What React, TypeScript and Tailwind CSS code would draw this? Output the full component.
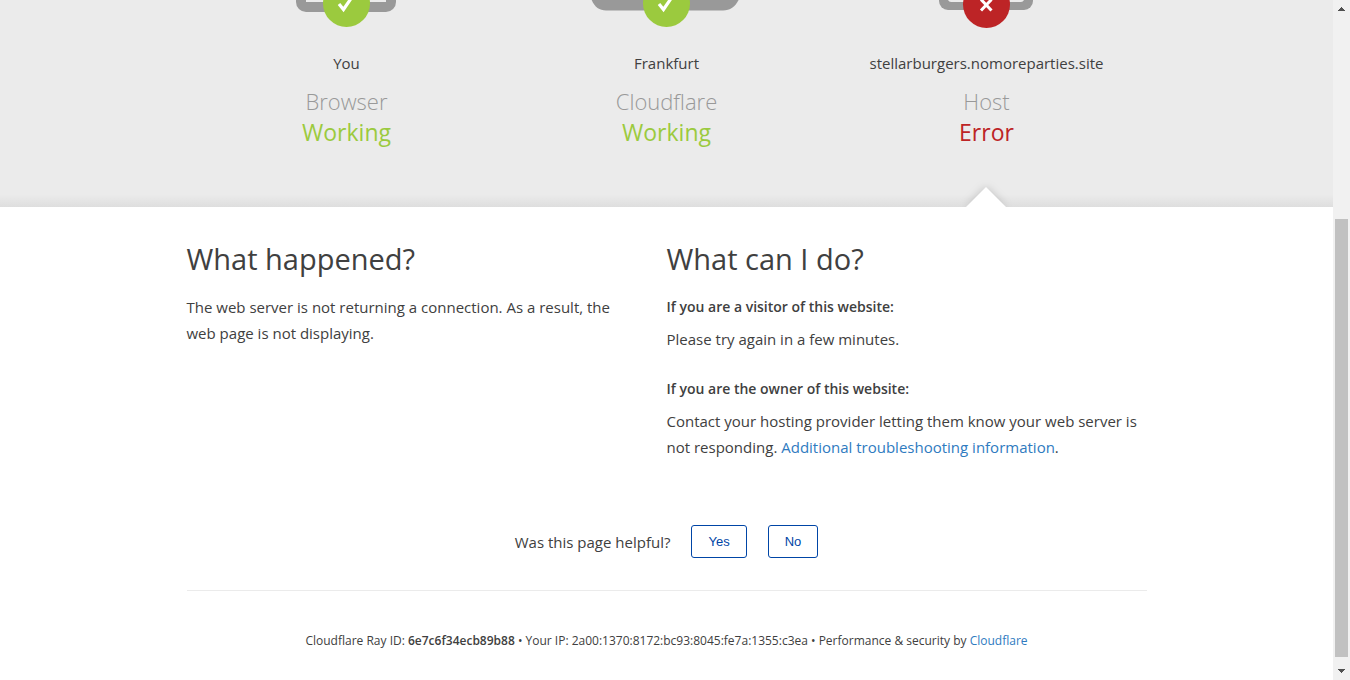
import type { ReactNode } from "react";

function BrowserIcon() {
  return (
    <svg width="151" height="28" viewBox="0 0 151 28" aria-hidden="true">
      <path d="M25 0H125V2A10 10 0 0 1 115 12H35A10 10 0 0 1 25 2Z" fill="#999" />
      <path d="M35 0H115V2H35Z" fill="#ebebeb" />
      <circle cx="75.5" cy="3.5" r="23.5" fill="#9bca3e" />
      <path d="M68 4L72.5 9.5L80 -1.5" fill="none" stroke="#fff" strokeWidth="3.2" />
    </svg>
  );
}

function CloudIcon() {
  return (
    <svg width="151" height="28" viewBox="0 0 151 28" aria-hidden="true">
      <path d="M-1 -6H150C147 4 141 10.5 132 10.5H15C7 10.5 1 5 -1 -6Z" fill="#999" />
      <circle cx="75.5" cy="3.5" r="23.5" fill="#9bca3e" />
      <path d="M68 4L72.5 9.5L80 -1.5" fill="none" stroke="#fff" strokeWidth="3.2" />
    </svg>
  );
}

function HostIcon() {
  return (
    <svg width="151" height="28" viewBox="0 0 151 28" aria-hidden="true">
      <path d="M28 0H122V1A9 9 0 0 1 113 10H37A9 9 0 0 1 28 1Z" fill="#999" />
      <path d="M37 0H113Q112 2 110 2H40Q38 2 37 0Z" fill="#ebebeb" />
      <circle cx="75.5" cy="4.5" r="23.5" fill="#bd2426" />
      <path d="M70 -0.5L80.5 10.5M80.5 -0.5L70 10.5" stroke="#fff" strokeWidth="3" />
    </svg>
  );
}

type StatusProps = {
  icon: ReactNode;
  place: string;
  name: string;
  status: string;
  failed?: boolean;
};

function Status({ icon, place, name, status, failed }: StatusProps) {
  return (
    <div className="relative flex flex-1 flex-col items-center pb-[59px] text-center">
      {icon}
      <span className="mt-[23px] text-[15px] leading-6">{place}</span>
      <h3 className="mt-[11px] text-[22px] leading-[30px] font-light text-[#999]">{name}</h3>
      <span className={failed ? "text-[23px] leading-8 text-[#bd2426]" : "text-[23px] leading-8 text-[#9bca3e]"}>
        {status}
      </span>
      {failed && (
        <svg className="absolute bottom-0" width="61" height="30" viewBox="0 0 61 30" aria-hidden="true">
          <path d="M10 30L30 10L50 30Z" fill="#fff" className="drop-shadow-[0_0_4px_rgba(0,0,0,0.18)]" />
        </svg>
      )}
    </div>
  );
}

function ScrollBar() {
  return (
    <div className="flex w-[17px] shrink-0 flex-col items-center bg-[#f1f1f1]" aria-hidden="true">
      <svg width="17" height="17" viewBox="0 0 17 17" shapeRendering="crispEdges">
        <path d="M8 7h1v1h1v1h1v1h1v1H5v-1h1v-1h1v-1h1Z" fill="#505050" />
      </svg>
      <div className="grow-202 basis-0" />
      <div className="w-[13px] grow-438 basis-0 bg-[#c1c1c1]" />
      <div className="grow-6 basis-0" />
      <svg width="17" height="17" viewBox="0 0 17 17" shapeRendering="crispEdges">
        <path d="M5 6h7v1h-1v1h-1v1H9v1H8V9H7V8H6V7H5Z" fill="#505050" />
      </svg>
    </div>
  );
}

const button =
  "rounded-[3px] border border-[#0045a6] px-4 py-1.5 font-['Liberation_Sans',sans-serif] text-[13px] leading-[19px] text-[#0045a6]";

export default function App() {
  return (
    <div className="flex min-h-screen bg-white font-['Open_Sans','Noto_Sans',sans-serif] text-[#404040]">
      <main className="min-w-0 flex-1">
        <section className="bg-[linear-gradient(to_top,#dedede,#ebebeb_6%)]">
          <div className="mx-auto flex max-w-[960px]">
            <Status icon={<BrowserIcon />} place="You" name="Browser" status="Working" />
            <Status icon={<CloudIcon />} place="Frankfurt" name="Cloudflare" status="Working" />
            <Status icon={<HostIcon />} place="stellarburgers.nomoreparties.site" name="Host" status="Error" failed />
          </div>
        </section>

        <div className="mx-auto max-w-[960px]">
          <section className="grid grid-cols-2 pt-8 text-[15px] leading-[26px]">
            <div className="pr-12">
              <h2 className="mb-[15px] text-[29px] leading-10">What happened?</h2>
              <p>The web server is not returning a connection. As a result, the web page is not displaying.</p>
            </div>
            <div>
              <h2 className="mb-4 text-[29px] leading-10">What can I do?</h2>
              <h3 className="mb-[7px] text-[14px] leading-6 font-semibold">If you are a visitor of this website:</h3>
              <p>Please try again in a few minutes.</p>
              <h3 className="mt-[25px] mb-[7px] text-[14px] leading-6 font-semibold">If you are the owner of this website:</h3>
              <p>
                Contact your hosting provider letting them know your web server is not responding.{" "}
                <a href="#troubleshooting" className="text-[#2f7bbf]">Additional troubleshooting information</a>.
              </p>
            </div>
          </section>

          <div className="mt-[65px] flex items-center justify-center border-b border-[#ebebeb] pb-8 text-[15px] leading-6">
            <span>Was this page helpful?</span>
            <button type="button" className={`${button} ml-[21px]`}>Yes</button>
            <button type="button" className={`${button} ml-[21px]`}>No</button>
          </div>

          <footer className="pt-10 pb-7 text-center text-[12px] leading-5">
            Cloudflare Ray ID: <strong className="font-semibold">6e7c6f34ecb89b88</strong> • Your IP:
            2a00:1370:8172:bc93:8045:fe7a:1355:c3ea • Performance &amp; security by{" "}
            <a href="#cloudflare" className="text-[#2f7bbf]">Cloudflare</a>
          </footer>
        </div>
      </main>
      <ScrollBar />
    </div>
  );
}
